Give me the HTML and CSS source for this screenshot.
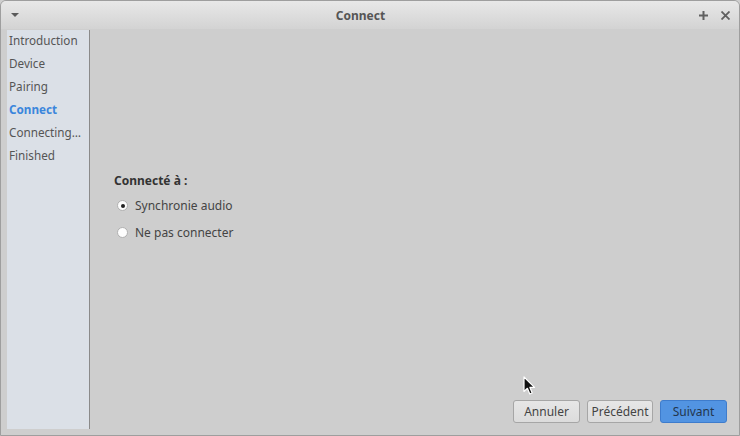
FILE: index.html
```html
<!DOCTYPE html>
<html>
<head>
<meta charset="utf-8">
<link rel="stylesheet" href="styles.css">
</head>
<body>
<div class="window">
  <div class="titlebar">
    <svg class="menu-icon" width="8" height="5" viewBox="0 0 8 5"><path d="M0 0 H8 L4 4 Z" fill="#5a5a5a"/></svg>
    <div class="title">Connect</div>
    <div class="controls">
      <svg width="9" height="9" viewBox="0 0 9 9"><path d="M4.5 0 V9 M0 4.5 H9" stroke="#606060" stroke-width="2"/></svg>
      <svg width="9" height="9" viewBox="0 0 9 9"><path d="M0.5 0.5 L8.5 8.5 M8.5 0.5 L0.5 8.5" stroke="#606060" stroke-width="1.8"/></svg>
    </div>
  </div>
  <div class="content">
    <ul class="sidebar">
      <li>Introduction</li>
      <li>Device</li>
      <li>Pairing</li>
      <li class="active">Connect</li>
      <li>Connecting…</li>
      <li>Finished</li>
    </ul>
    <div class="main">
      <div class="form">
        <div class="label">Connecté à :</div>
        <label class="radio"><span class="dot checked"></span>Synchronie audio</label>
        <label class="radio"><span class="dot"></span>Ne pas connecter</label>
      </div>
      <div class="buttons">
        <button class="btn">Annuler</button>
        <button class="btn">Précédent</button>
        <button class="btn primary">Suivant</button>
      </div>
    </div>
  </div>
  <svg class="cursor" width="13" height="20" viewBox="0 0 13 20"><path d="M1 1 V15.5 L4.4 12.3 L6.8 18 L9.2 17 L6.9 11.4 L11.5 11.4 Z" fill="#111" stroke="#fff" stroke-width="1.2" stroke-linejoin="round"/></svg>
</div>
</body>
</html>
```
FILE: styles.css
```css
* { box-sizing: border-box; }
html, body { margin: 0; padding: 0; background: #cfcfcf; }
body { font-family: "Noto Sans", "Open Sans", sans-serif; font-size: 12px; color: #4a4a4a; }
.window {
  position: relative;
  width: 740px; height: 436px;
  border: 1px solid #9e9e9e;
  border-radius: 6px 6px 0 0;
  background: #cecece;
  display: flex; flex-direction: column;
  overflow: hidden;
}
.titlebar {
  height: 28px;
  flex: none;
  display: flex; align-items: center;
  background: linear-gradient(#e8e8e8, #d3d3d3);
  padding: 0 9px 0 10px;
}
.menu-icon { flex: none; margin-top: 1px; }
.title { flex: 1; text-align: center; font-weight: bold; font-size: 12px; color: #555; padding-left: 3px; }
.controls { display: flex; gap: 13px; align-items: center; }
.content {
  flex: 1;
  display: flex;
  padding: 1px 0 6px 6px;
}
.sidebar {
  list-style: none; margin: 0;
  width: 83px;
  background: #dbe0e7;
  border-right: 1px solid #8a8a8a;
  padding: 2px 0 0 2px;
}
.sidebar li { height: 23px; line-height: 16px; color: #555; font-size: 11.7px; }
.sidebar li.active { color: #3a86dc; font-weight: bold; }
.main { flex: 1; display: flex; flex-direction: column; padding: 143px 12px 6px 24px; }
.form { flex: 1; }
.label { font-weight: bold; color: #333; line-height: 16px; margin-bottom: 7px; }
.radio { display: flex; align-items: center; height: 19px; margin-bottom: 8px; padding-left: 3px; color: #444; }
.dot {
  width: 11px; height: 11px; border-radius: 50%;
  background: #fdfdfd; border: 1px solid #b0b0b0;
  margin-right: 7px; position: relative;
}
.dot.checked::after {
  content: ""; position: absolute; left: 2.5px; top: 2.5px; width: 4px; height: 4px; border-radius: 50%; background: #222;
}
.buttons { display: flex; justify-content: flex-end; gap: 7px; }
.btn {
  font-family: inherit; font-size: 12px; color: #444;
  height: 23px; width: 67px; padding: 0;
  border: 1px solid #a6a6a6; border-radius: 3px;
  background: linear-gradient(#e6e6e6, #dcdcdc);
}
.btn:nth-child(2) { width: 66px; }
.btn.primary { background: #5294e2; border-color: #3e7ccc; color: #23364d; }
.cursor { position: absolute; left: 522px; top: 375px; }
```
